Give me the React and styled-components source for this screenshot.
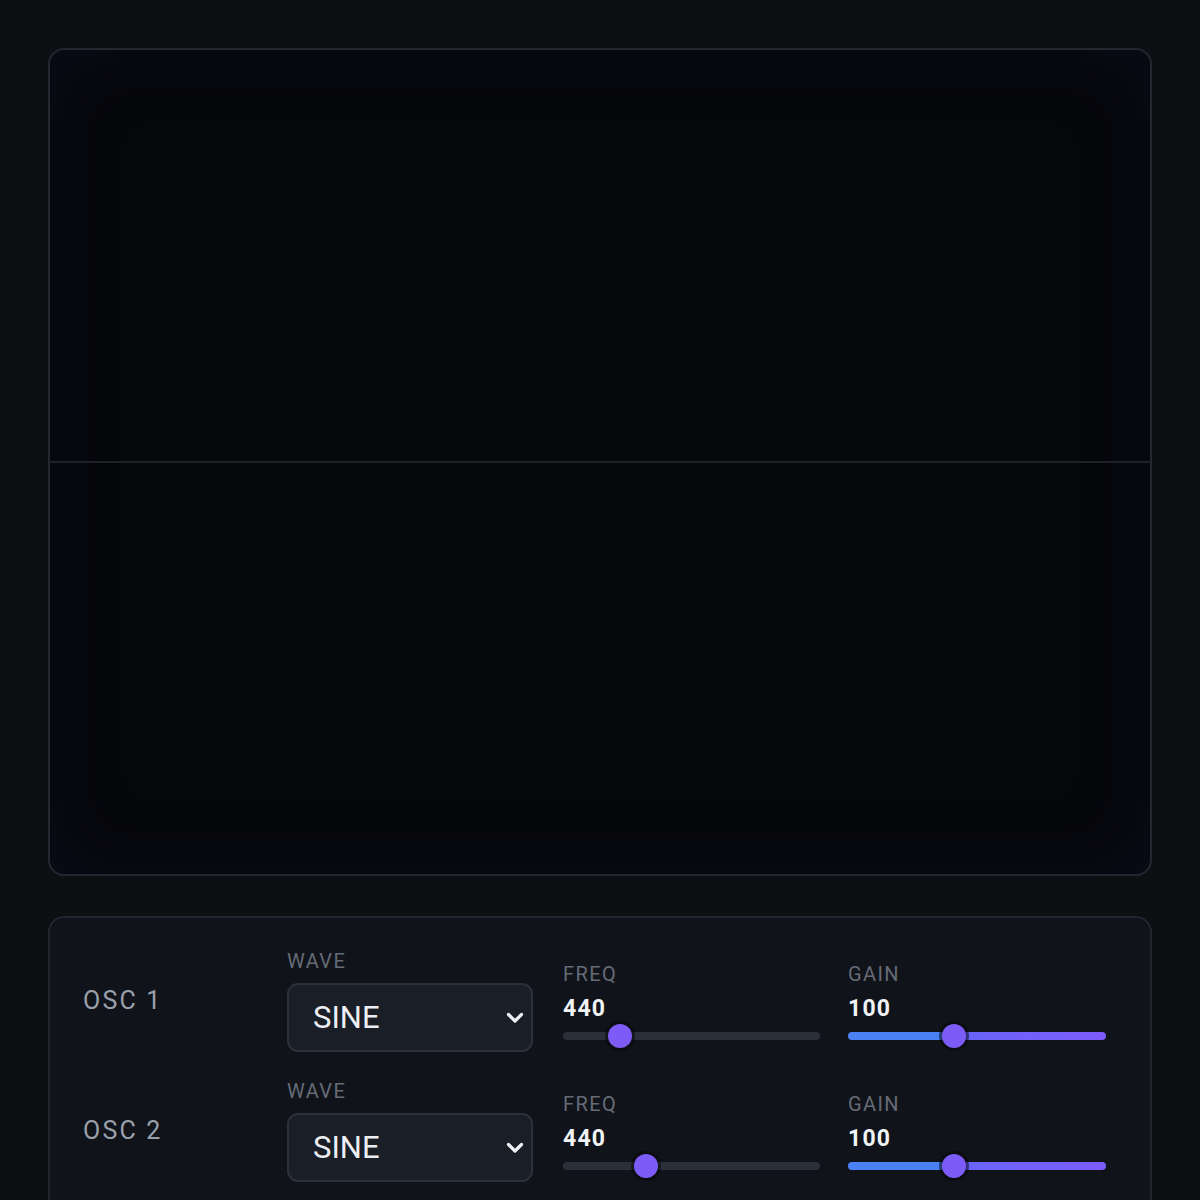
import React from "react";
import styled, { createGlobalStyle } from "styled-components";

const Global = createGlobalStyle`
  html, body {
    margin: 0;
    padding: 0;
    background: #0d0f13;
  }
  body {
    font-family: Roboto, "Liberation Sans", sans-serif;
    color: #e5e7eb;
  }
`;

const Page = styled.main`
  box-sizing: border-box;
  width: 1200px;
  padding: 48px;
  display: flex;
  flex-direction: column;
  gap: 40px;
`;

const Scope = styled.section`
  box-sizing: border-box;
  height: 828px;
  border: 2px solid #26272e;
  border-radius: 16px;
  background: #06070a;
  box-shadow: inset 0 0 80px rgba(58, 48, 140, 0.12);
  display: flex;
  overflow: hidden;
`;

const Trace = styled.svg`
  flex: 1;
  display: block;
`;

const Panel = styled.section`
  box-sizing: border-box;
  border: 2px solid #22262e;
  border-radius: 16px;
  background: #10131a;
  padding: 31px 45px 40px 33px;
  display: flex;
  flex-direction: column;
  gap: 27px;
`;

const Row = styled.div`
  display: grid;
  grid-template-columns: 204px 276px 285px 1fr;
  align-items: center;
`;

const OscName = styled.div`
  font-size: 25px;
  letter-spacing: 2.2px;
  color: #9aa0aa;
  line-height: 30px;
`;

const Field = styled.div`
  display: flex;
  flex-direction: column;
  padding-top: ${(p) => p.$offset || 0}px;
`;

const Label = styled.div`
  font-size: 20px;
  line-height: 24px;
  letter-spacing: 1.4px;
  color: #656b76;
  margin-bottom: ${(p) => p.$space}px;
`;

const Value = styled.div`
  font-size: 23px;
  line-height: 28px;
  font-weight: 700;
  letter-spacing: 1.2px;
  color: #f1f3f6;
  margin-bottom: 1px;
`;

const SelectWrap = styled.div`
  position: relative;
  width: 246px;
`;

const Select = styled.select`
  appearance: none;
  box-sizing: border-box;
  width: 100%;
  height: 69px;
  border: 2px solid #2b3039;
  border-radius: 11px;
  background: #1a1e26;
  color: #eceef3;
  font-family: Roboto, "Liberation Sans", sans-serif;
  font-size: 31px;
  padding: 0 40px 0 24px;
  outline: none;
`;

const Chevron = styled.svg`
  position: absolute;
  right: 9px;
  top: 50%;
  transform: translateY(-50%);
  pointer-events: none;
`;

const Range = styled.input`
  appearance: none;
  -webkit-appearance: none;
  display: block;
  margin: 0;
  width: ${(p) => p.$width}px;
  height: 24px;
  background: transparent;

  &::-webkit-slider-runnable-track {
    height: 8px;
    border-radius: 4px;
    background: ${(p) => p.$track};
  }
  &::-webkit-slider-thumb {
    -webkit-appearance: none;
    appearance: none;
    width: 24px;
    height: 24px;
    margin-top: -8px;
    border-radius: 50%;
    background: #7b5cf7;
    box-shadow: 0 0 0 3px rgba(6, 7, 10, 0.55);
    border: none;
  }
`;

const plainTrack = "#2a2f39";

function gainTrack(min, max, value, width) {
  const center = 12 + ((value - min) / (max - min)) * (width - 24);
  const p = ((center / width) * 100).toFixed(1);
  return `linear-gradient(90deg, #4a82f6 0%, #4a82f6 ${p}%, #6864f9 ${p}%, #7c5cfb 100%)`;
}

function Slider({ min, max, value, width, gradient }) {
  return (
    <Range
      type="range"
      min={min}
      max={max}
      defaultValue={value}
      $width={width}
      $track={gradient ? gainTrack(min, max, value, width) : plainTrack}
    />
  );
}

const oscillators = [
  { name: "OSC 1", wave: "sine", freq: 440, fMin: 0, fMax: 2280, gain: 100 },
  { name: "OSC 2", wave: "sine", freq: 440, fMin: 0, fMax: 1440, gain: 100 },
];

function OscRow({ osc }) {
  return (
    <Row>
      <OscName>{osc.name}</OscName>
      <Field>
        <Label $space={10}>WAVE</Label>
        <SelectWrap>
          <Select defaultValue={osc.wave}>
            <option value="sine">SINE</option>
            <option value="square">SQUARE</option>
            <option value="sawtooth">SAW</option>
            <option value="triangle">TRI</option>
          </Select>
          <Chevron width="18" height="12" viewBox="0 0 18 12">
            <path
              d="M2.5 2.5 L9 9 L15.5 2.5"
              fill="none"
              stroke="#eef0f4"
              strokeWidth="3.2"
              strokeLinecap="round"
              strokeLinejoin="round"
            />
          </Chevron>
        </SelectWrap>
      </Field>
      <Field $offset={8}>
        <Label $space={9}>FREQ</Label>
        <Value>{osc.freq}</Value>
        <Slider min={osc.fMin} max={osc.fMax} value={osc.freq} width={257} />
      </Field>
      <Field $offset={8}>
        <Label $space={9}>GAIN</Label>
        <Value>{osc.gain}</Value>
        <Slider min={0} max={250} value={osc.gain} width={258} gradient />
      </Field>
    </Row>
  );
}

export default function App() {
  return (
    <>
      <Global />
      <Page>
        <Scope>
          <Trace viewBox="0 0 1100 824" preserveAspectRatio="none">
            <line x1="0" y1="412" x2="1100" y2="412" stroke="#202127" strokeWidth="2" />
          </Trace>
        </Scope>
        <Panel>
          {oscillators.map((o) => (
            <OscRow key={o.name} osc={o} />
          ))}
        </Panel>
      </Page>
    </>
  );
}
